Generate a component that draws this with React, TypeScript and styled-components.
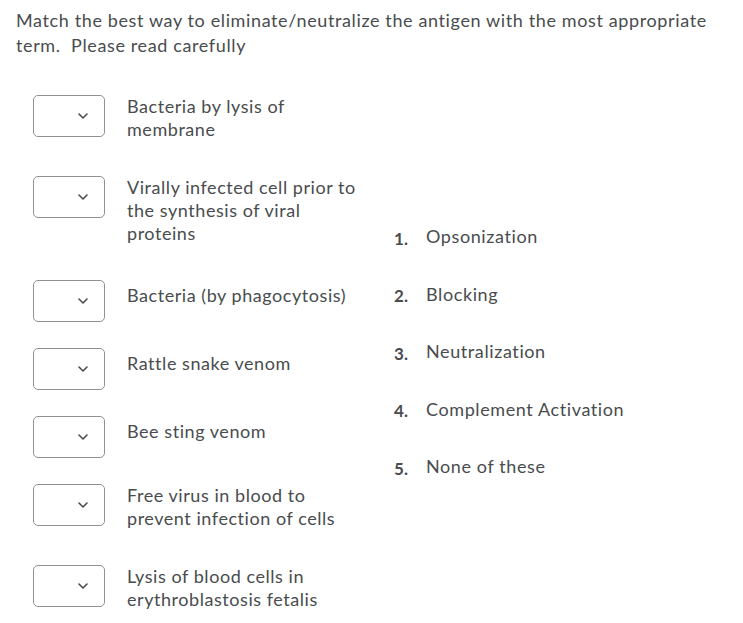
import React from 'react';
import styled, { createGlobalStyle } from 'styled-components';

const GlobalStyle = createGlobalStyle`
  html, body {
    margin: 0;
    padding: 0;
    background: #ffffff;
  }
  body {
    font-family: Lato, 'Noto Sans', 'Liberation Sans', sans-serif;
    color: #494c4e;
  }
`;

const Page = styled.div`
  padding: 8px 16px 0 16px;
`;

const Question = styled.p`
  margin: 0;
  font-size: 18px;
  letter-spacing: 0.62px;
  line-height: 25px;
  width: 711px;
`;

const Matching = styled.div`
  display: flex;
  align-items: center;
  margin-top: 37px;
  padding-left: 17px;
`;

const Items = styled.div`
  display: flex;
  flex-direction: column;
  width: 361px;
`;

const Row = styled.div<{ $single: boolean }>`
  display: flex;
  align-items: flex-start;
  gap: 22px;
  margin-bottom: ${(p) => (p.$single ? '26px' : '34.5px')};

  &:last-child {
    margin-bottom: 0;
  }
`;

const SelectBox = styled.div`
  flex: none;
  width: 54px;
  height: 40px;
  padding-right: 16px;
  border: 1px solid #8f9294;
  border-radius: 5px;
  display: flex;
  align-items: center;
  justify-content: flex-end;
  background: #fff;
`;

const ItemText = styled.div<{ $single: boolean }>`
  font-size: 18px;
  letter-spacing: 0.55px;
  line-height: 23px;
  padding-top: ${(p) => (p.$single ? '4px' : '0')};
  padding-bottom: ${(p) => (p.$single ? '0' : '0.5px')};
`;

const Choices = styled.ol`
  list-style: none;
  margin: 0;
  padding: 0 0 3px 0;
  display: flex;
  flex-direction: column;
  gap: 34.5px;
`;

const Choice = styled.li`
  display: flex;
  align-items: flex-start;
  font-size: 18px;
  letter-spacing: 0.6px;
  line-height: 23px;
`;

const ChoiceNumber = styled.span`
  width: 32px;
  font-weight: 700;
  font-size: 17px;
  letter-spacing: 0;
  line-height: 18.5px;
  padding-top: 4.5px;
`;

const Chevron = () => (
  <svg width="10" height="6" viewBox="0 0 10 6" fill="none">
    <path d="M1 1l4 4 4-4" stroke="#494c4e" strokeWidth="1.6" strokeLinecap="round" strokeLinejoin="round" />
  </svg>
);

const items: string[][] = [
  ['Bacteria by lysis of', 'membrane'],
  ['Virally infected cell prior to', 'the synthesis of viral', 'proteins'],
  ['Bacteria (by phagocytosis)'],
  ['Rattle snake venom'],
  ['Bee sting venom'],
  ['Free virus in blood to', 'prevent infection of cells'],
  ['Lysis of blood cells in', 'erythroblastosis fetalis'],
];

const choices = ['Opsonization', 'Blocking', 'Neutralization', 'Complement Activation', 'None of these'];

export default function App() {
  return (
    <Page>
      <GlobalStyle />
      <Question>
        Match the best way to eliminate/neutralize the antigen with the most appropriate term.&nbsp; Please read carefully
      </Question>
      <Matching>
        <Items>
          {items.map((lines, i) => (
            <Row key={i} $single={lines.length === 1}>
              <SelectBox>
                <Chevron />
              </SelectBox>
              <ItemText $single={lines.length === 1}>
                {lines.map((l, j) => (
                  <div key={j}>{l}</div>
                ))}
              </ItemText>
            </Row>
          ))}
        </Items>
        <Choices>
          {choices.map((c, i) => (
            <Choice key={c}>
              <ChoiceNumber>{i + 1}.</ChoiceNumber>
              <span>{c}</span>
            </Choice>
          ))}
        </Choices>
      </Matching>
    </Page>
  );
}
